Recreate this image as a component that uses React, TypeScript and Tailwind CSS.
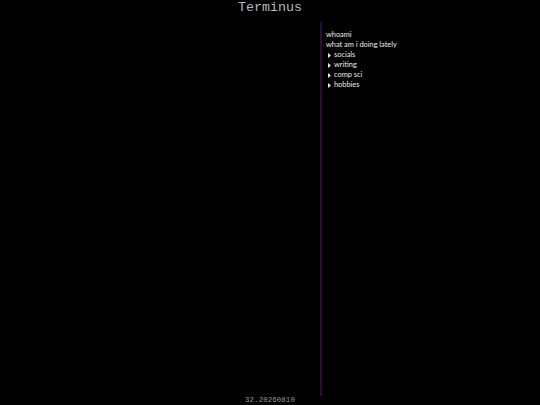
import React from 'react';

const sections = ['socials', 'writing', 'comp sci', 'hobbies'];

const Caret = () => (
  <svg width="3" height="5" viewBox="0 0 3 5" className="shrink-0">
    <path d="M0 0 L3 2.5 L0 5 Z" fill="#e5e5e5" />
  </svg>
);

const App: React.FC = () => {
  return (
    <div className="h-[405px] w-[540px] bg-black flex flex-col overflow-hidden">
      <header className="h-[22px] flex justify-center pt-[1px]">
        <h1 className="text-[13.3px] leading-[14px] text-[#b8b8b8] font-['Liberation_Mono',monospace]">
          Terminus
        </h1>
      </header>

      <main className="flex-1 flex">
        <div className="flex-1" />
        <aside className="w-[220px] border-l-2 border-[#2e0b3b] pl-[4px] pt-[8px] text-[7.4px] leading-[10px] text-[#ececec] font-['Lato',sans-serif]">
          <div>whoami</div>
          <div>what am i doing lately</div>
          <ul className="pl-[2px]">
            {sections.map(s => (
              <li key={s} className="flex items-center gap-[3px]">
                <Caret />
                <span>{s}</span>
              </li>
            ))}
          </ul>
        </aside>
      </main>

      <footer className="h-[9px] flex justify-center">
        <span className="text-[7.4px] leading-[9px] tracking-[0.1px] text-[#9a9a9a] font-['Liberation_Mono',monospace]">
          32.20260810
        </span>
      </footer>
    </div>
  );
};

export default App;
